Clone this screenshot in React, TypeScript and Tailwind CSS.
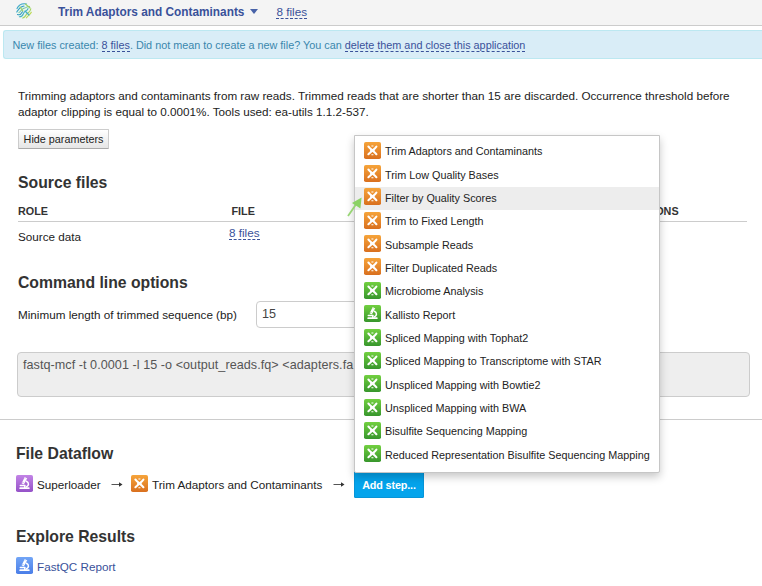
import React from "react";

type Tone = "orange" | "green" | "purple" | "blue";
type Glyph = "dna" | "scope";

const tones: Record<Tone, [string, string]> = {
  orange: ["#f6a43a", "#d9701f"],
  green: ["#72d040", "#37962c"],
  purple: ["#c283e6", "#9552c8"],
  blue: ["#72a5f6", "#4a7ee8"],
};

function AppIcon({ tone, glyph = "dna" }: { tone: Tone; glyph?: Glyph }) {
  const [from, to] = tones[tone];
  const id = `${tone}-fill`;
  return (
    <svg className="block h-[17px] w-[17px] shrink-0" viewBox="0 0 17 17" fill="none">
      <defs>
        <linearGradient id={id} x1="0" y1="0" x2="0" y2="1">
          <stop offset="0" stopColor={from} />
          <stop offset="1" stopColor={to} />
        </linearGradient>
      </defs>
      <rect width="17" height="17" rx="1.8" fill={`url(#${id})`} />
      {glyph === "dna" ? (
        <g stroke="#fff" strokeLinecap="round">
          <path d="M4.4 4.6L6 6.2L11 10.8L12.4 12.2" strokeWidth="2.1" />
          <path d="M12.4 4.6L11 6.2L6 10.8L4.4 12.2" strokeWidth="2.1" />
          <path d="M7.4 4H9.4M7.4 12.8H9.4" strokeWidth="1.1" strokeLinecap="butt" />
          <path d="M7.4 8.4H9.4" strokeWidth="2.4" />
        </g>
      ) : (
        <g stroke="#fff" strokeLinecap="round">
          <path d="M9.4 3.6L7.4 7.6" strokeWidth="2.6" strokeLinecap="butt" />
          <path d="M8.8 2.8L10.6 3.7M6.2 7.9L7.9 8.8" strokeWidth="1.1" />
          <path d="M10.4 6.2C13.2 7.3 13.2 11 10.2 12" strokeWidth="1.5" />
          <path d="M4.3 10.4H9M8.8 10.8V13" strokeWidth="1.5" />
          <path d="M4.2 13.2H12.8" strokeWidth="1.8" />
        </g>
      )}
    </svg>
  );
}

function Logo() {
  return (
    <svg className="block h-4 w-4" viewBox="0 0 16 16" fill="none" strokeLinecap="round">
      <circle cx="8" cy="8" r="7.8" fill="#e6f5ee" />
      <g strokeWidth="1.1">
        <path d="M1 5.5C3 1.5 7 .3 10.5 1" stroke="#3ba5cb" />
        <path d="M.8 9C3 6 4 3.4 8 3" stroke="#2f9bc4" />
        <path d="M3 9.5C5 9 5 6 8 5.3S11 3 13.5 3.5" stroke="#78c5a0" />
        <path d="M1.5 11.5C4 12.5 5.5 10.5 6.5 8.7" stroke="#3499c0" />
        <path d="M3.4 13.8C7 14 7 11 8 9.5S12 7.5 12 5.5" stroke="#45b0c5" />
        <path d="M6.8 15.1C10 14 9.5 11.8 11.2 10.5S14.5 8.5 14.8 5.7" stroke="#a5d25a" />
        <path d="M10.5 14.8C12 12 14 12 15.3 9.2" stroke="#c0d850" />
        <path d="M9.5 1.2L14 5M4 4L7 8" stroke="#a0d05a" />
        <path d="M9 8L13 12" stroke="#45aac8" />
      </g>
    </svg>
  );
}

function Arrow() {
  return (
    <svg className="block h-[7px] w-[12px]" viewBox="0 0 12 7" fill="none">
      <path d="M0.5 3.5H9.5" stroke="#555" />
      <path d="M8 1.2L11.5 3.5L8 5.8Z" fill="#333" />
    </svg>
  );
}

function FileLink({ children, className = "" }: { children: React.ReactNode; className?: string }) {
  return (
    <a
      className={`inline-block whitespace-nowrap border-b border-dashed border-[#39519a] text-[#39519a] ${className}`}
    >
      {children}
    </a>
  );
}

const steps: { label: string; tone: Tone; glyph?: Glyph }[] = [
  { label: "Trim Adaptors and Contaminants", tone: "orange" },
  { label: "Trim Low Quality Bases", tone: "orange" },
  { label: "Filter by Quality Scores", tone: "orange" },
  { label: "Trim to Fixed Length", tone: "orange" },
  { label: "Subsample Reads", tone: "orange" },
  { label: "Filter Duplicated Reads", tone: "orange" },
  { label: "Microbiome Analysis", tone: "green" },
  { label: "Kallisto Report", tone: "green", glyph: "scope" },
  { label: "Spliced Mapping with Tophat2", tone: "green" },
  { label: "Spliced Mapping to Transcriptome with STAR", tone: "green" },
  { label: "Unspliced Mapping with Bowtie2", tone: "green" },
  { label: "Unspliced Mapping with BWA", tone: "green" },
  { label: "Bisulfite Sequencing Mapping", tone: "green" },
  { label: "Reduced Representation Bisulfite Sequencing Mapping", tone: "green" },
];

function StepMenu() {
  return (
    <div className="absolute bottom-[25px] left-0 h-[338px] w-[306px] rounded-b-[2px] border border-[#c6c6c6] bg-white pt-[4px] text-[10.8px] text-[#222] shadow-[0_4px_9px_rgba(0,0,0,0.22)]">
      {steps.map((s) => (
        <div
          key={s.label}
          className={`flex h-[23.36px] items-center whitespace-nowrap pl-[9px] ${
            s.label === "Filter by Quality Scores" ? "bg-[#ededed]" : ""
          }`}
        >
          <div className="pb-[3px]">
            <AppIcon tone={s.tone} glyph={s.glyph} />
          </div>
          <span className="pb-px pl-[4px]">{s.label}</span>
        </div>
      ))}
      <svg className="absolute -left-[9px] top-[60px] h-[22px] w-[18px]" viewBox="0 0 18 22">
        <path d="M2 20L11 7" stroke="#97d574" strokeWidth="1.8" />
        <path d="M15.6 1.5L6 7L14.4 12.5Z" fill="#8bd265" />
      </svg>
    </div>
  );
}

export default function App() {
  return (
    <div className="h-[586px] w-[762px] overflow-hidden bg-white font-['Liberation_Sans',Arial,sans-serif] text-[11.7px] leading-[16px] text-[#222]">
      <header className="flex h-[26px] items-center border-b border-[#ccc] bg-[#f4f4f4] pb-[3px] pl-[16px]">
        <Logo />
        <h1 className="ml-[26px] whitespace-nowrap pt-[2px] text-[11.85px] font-bold text-[#39519a]">Trim Adaptors and Contaminants</h1>
        <svg className="ml-[6px] h-[5px] w-[8px]" viewBox="0 0 8 5">
          <path d="M0 0H8L4 5Z" fill="#4862a8" />
        </svg>
        <FileLink className="ml-[18px] mt-[2px] leading-[13px]">8 files</FileLink>
      </header>

      <div className="ml-[3px] mt-[4px] flex h-[29px] items-center whitespace-pre rounded-l-[3px] border border-r-0 border-[#bce8f1] bg-[#d9edf7] pl-[8.5px] text-[10.83px] text-[#3a87ad]">
        New files created: <FileLink className="mt-[2px] leading-[12px]">8 files</FileLink>. Did not mean to create a new file? You can{" "}
        <FileLink className="mt-[2px] leading-[12px]">delete them and close this application</FileLink>
      </div>

      <section className="h-[361px] border-b border-[#ccc] pl-[18px] pt-[29px]">
        <p className="whitespace-nowrap">
          Trimming adaptors and contaminants from raw reads. Trimmed reads that are shorter than 15 are discarded. Occurrence threshold before
          <br />
          adaptor clipping is equal to 0.0001%. Tools used: ea-utils 1.1.2-537.
        </p>
        <button className="mt-[9px] block h-[20px] w-[91px] whitespace-nowrap rounded-[1px] border border-[#ccc] border-b-[#aaa] bg-linear-to-b from-white to-[#e6e6e6] text-[10.8px] leading-[18px]">
          Hide parameters
        </button>
        <h2 className="mt-[24px] text-[15.75px] font-bold leading-[20px] text-[#333]">Source files</h2>
        <div className="mt-[8px] flex h-[21px] w-[729px] border-b border-[#ccc] pt-[2px] text-[10.8px] font-bold text-[#333]">
          <span className="w-[213.5px]">ROLE</span>
          <span className="w-[376.5px]">FILE</span>
          <span>OPERATIONS</span>
        </div>
        <div className="flex h-[51px]">
          <span className="w-[211px] pt-[7px]">Source data</span>
          <span className="pt-[3px]">
            <FileLink className="leading-[13px]">8 files</FileLink>
          </span>
        </div>
        <h2 className="text-[15.75px] font-bold leading-[20px] text-[#333]">Command line options</h2>
        <div className="mt-[8px] flex h-[27px] items-center">
          <label className="w-[238px] whitespace-nowrap">Minimum length of trimmed sequence (bp)</label>
          <div className="h-[27px] w-[190px] rounded-[4px] border border-[#ccc] pl-[5px] text-[12.6px] leading-[25px] text-[#444]">15</div>
        </div>
        <div className="-ml-px mt-[24px] h-[45px] w-[733px] rounded-[4px] border border-[#ccc] bg-[#eee] pl-[5px] pt-[3px] text-[12.6px] leading-[18px] tracking-[0.05px] text-[#555]">
          fastq-mcf -t 0.0001 -l 15 -o &lt;output_reads.fq&gt; &lt;adapters.fa
        </div>
      </section>

      <section className="pl-[16px] pt-[24px]">
        <h2 className="text-[15.75px] font-bold leading-[20px] text-[#333]">File Dataflow</h2>
        <div className="mt-[7px] flex h-[27px] items-center whitespace-nowrap">
          <div className="pb-[3px]">
            <AppIcon tone="purple" glyph="scope" />
          </div>
          <span className="w-[78px] pl-[4px]">Superloader</span>
          <Arrow />
          <div className="pb-[3px] pl-[8px]">
            <AppIcon tone="orange" />
          </div>
          <span className="w-[185px] pl-[4px]">Trim Adaptors and Contaminants</span>
          <Arrow />
          <div className="relative ml-[9px] h-[27px] w-[70px]">
            <button className="h-[27px] w-[70px] rounded-[1px] border border-[#0795d8] bg-[#04a4ec] text-[10.8px] font-bold tracking-[-0.15px] text-white">
              Add step...
            </button>
            <StepMenu />
          </div>
        </div>
        <h2 className="mt-[29px] text-[15.75px] font-bold leading-[20px] text-[#333]">Explore Results</h2>
        <div className="mt-[9px] flex items-center text-[#39519a]">
          <AppIcon tone="blue" glyph="scope" />
          <span className="pl-[4px] pt-[3px]">FastQC Report</span>
        </div>
      </section>
    </div>
  );
}
